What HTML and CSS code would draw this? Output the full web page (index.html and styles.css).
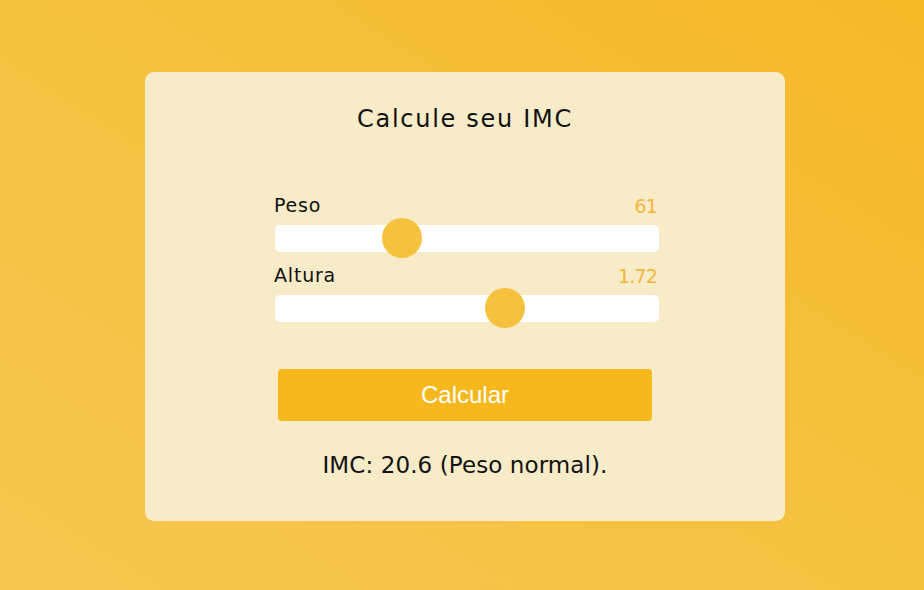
FILE: index.html
```html
<!DOCTYPE html>
<html lang="pt">
<head>
<meta charset="utf-8">
<title>Calculadora IMC</title>
<link rel="stylesheet" href="styles.css">
</head>
<body>
<main class="card">
  <h1 class="title">Calcule seu IMC</h1>
  <div class="fields">
    <div class="field">
      <div class="field-head"><span class="label">Peso</span><span class="value">61</span></div>
      <div class="track"><span class="thumb" style="left: 107px"></span></div>
    </div>
    <div class="field">
      <div class="field-head"><span class="label">Altura</span><span class="value">1.72</span></div>
      <div class="track"><span class="thumb" style="left: 210px"></span></div>
    </div>
  </div>
  <button class="btn" type="button">Calcular</button>
  <p class="result">IMC: 20.6 (Peso normal).</p>
</main>
</body>
</html>
```
FILE: styles.css
```css
* { box-sizing: border-box; }
html, body { margin: 0; height: 100%; }
body {
  background: linear-gradient(to top right, #f6c74f 0%, #f5c140 50%, #f6b826 100%);
  padding: 72px 0 0 145px;
  font-family: "DejaVu Sans", "Noto Sans", sans-serif;
  color: #111;
}
.card {
  width: 640px;
  height: 449px;
  background: #f8ebc8;
  border-radius: 9px;
  padding: 29px 0 0;
  display: flex;
  flex-direction: column;
  align-items: center;
}
.title {
  margin: 0;
  font-weight: 400;
  font-size: 24px;
  line-height: 36px;
  letter-spacing: 1.7px;
}
.fields {
  width: 384px;
  margin: 57px 0 0 4px;
  display: flex;
  flex-direction: column;
  gap: 12px;
}
.field-head {
  display: flex;
  justify-content: space-between;
  align-items: flex-start;
  padding: 0 2px 0 0;
  height: 31px;
}
.label { font-size: 19px; line-height: 22px; letter-spacing: 0.8px; margin-left: -1px; }
.value { font-size: 19px; line-height: 22px; color: #f5b53a; letter-spacing: -0.8px; margin-top: 1px; }
.track {
  position: relative;
  height: 27px;
  background: #fff;
  border-radius: 5px;
}
.thumb {
  position: absolute;
  top: -7px;
  width: 40px;
  height: 40px;
  border-radius: 50%;
  background: #f6c13f;
}
.btn {
  margin-top: 47px;
  width: 374px;
  height: 52px;
  border: 0;
  border-radius: 4px;
  background: #f6b81d;
  color: #fff;
  font-family: "Liberation Sans", Arial, sans-serif;
  font-size: 24px;
}
.result {
  margin: 29px 0 0;
  font-size: 23px;
  line-height: 30px;
  letter-spacing: 0.1px;
}
```
